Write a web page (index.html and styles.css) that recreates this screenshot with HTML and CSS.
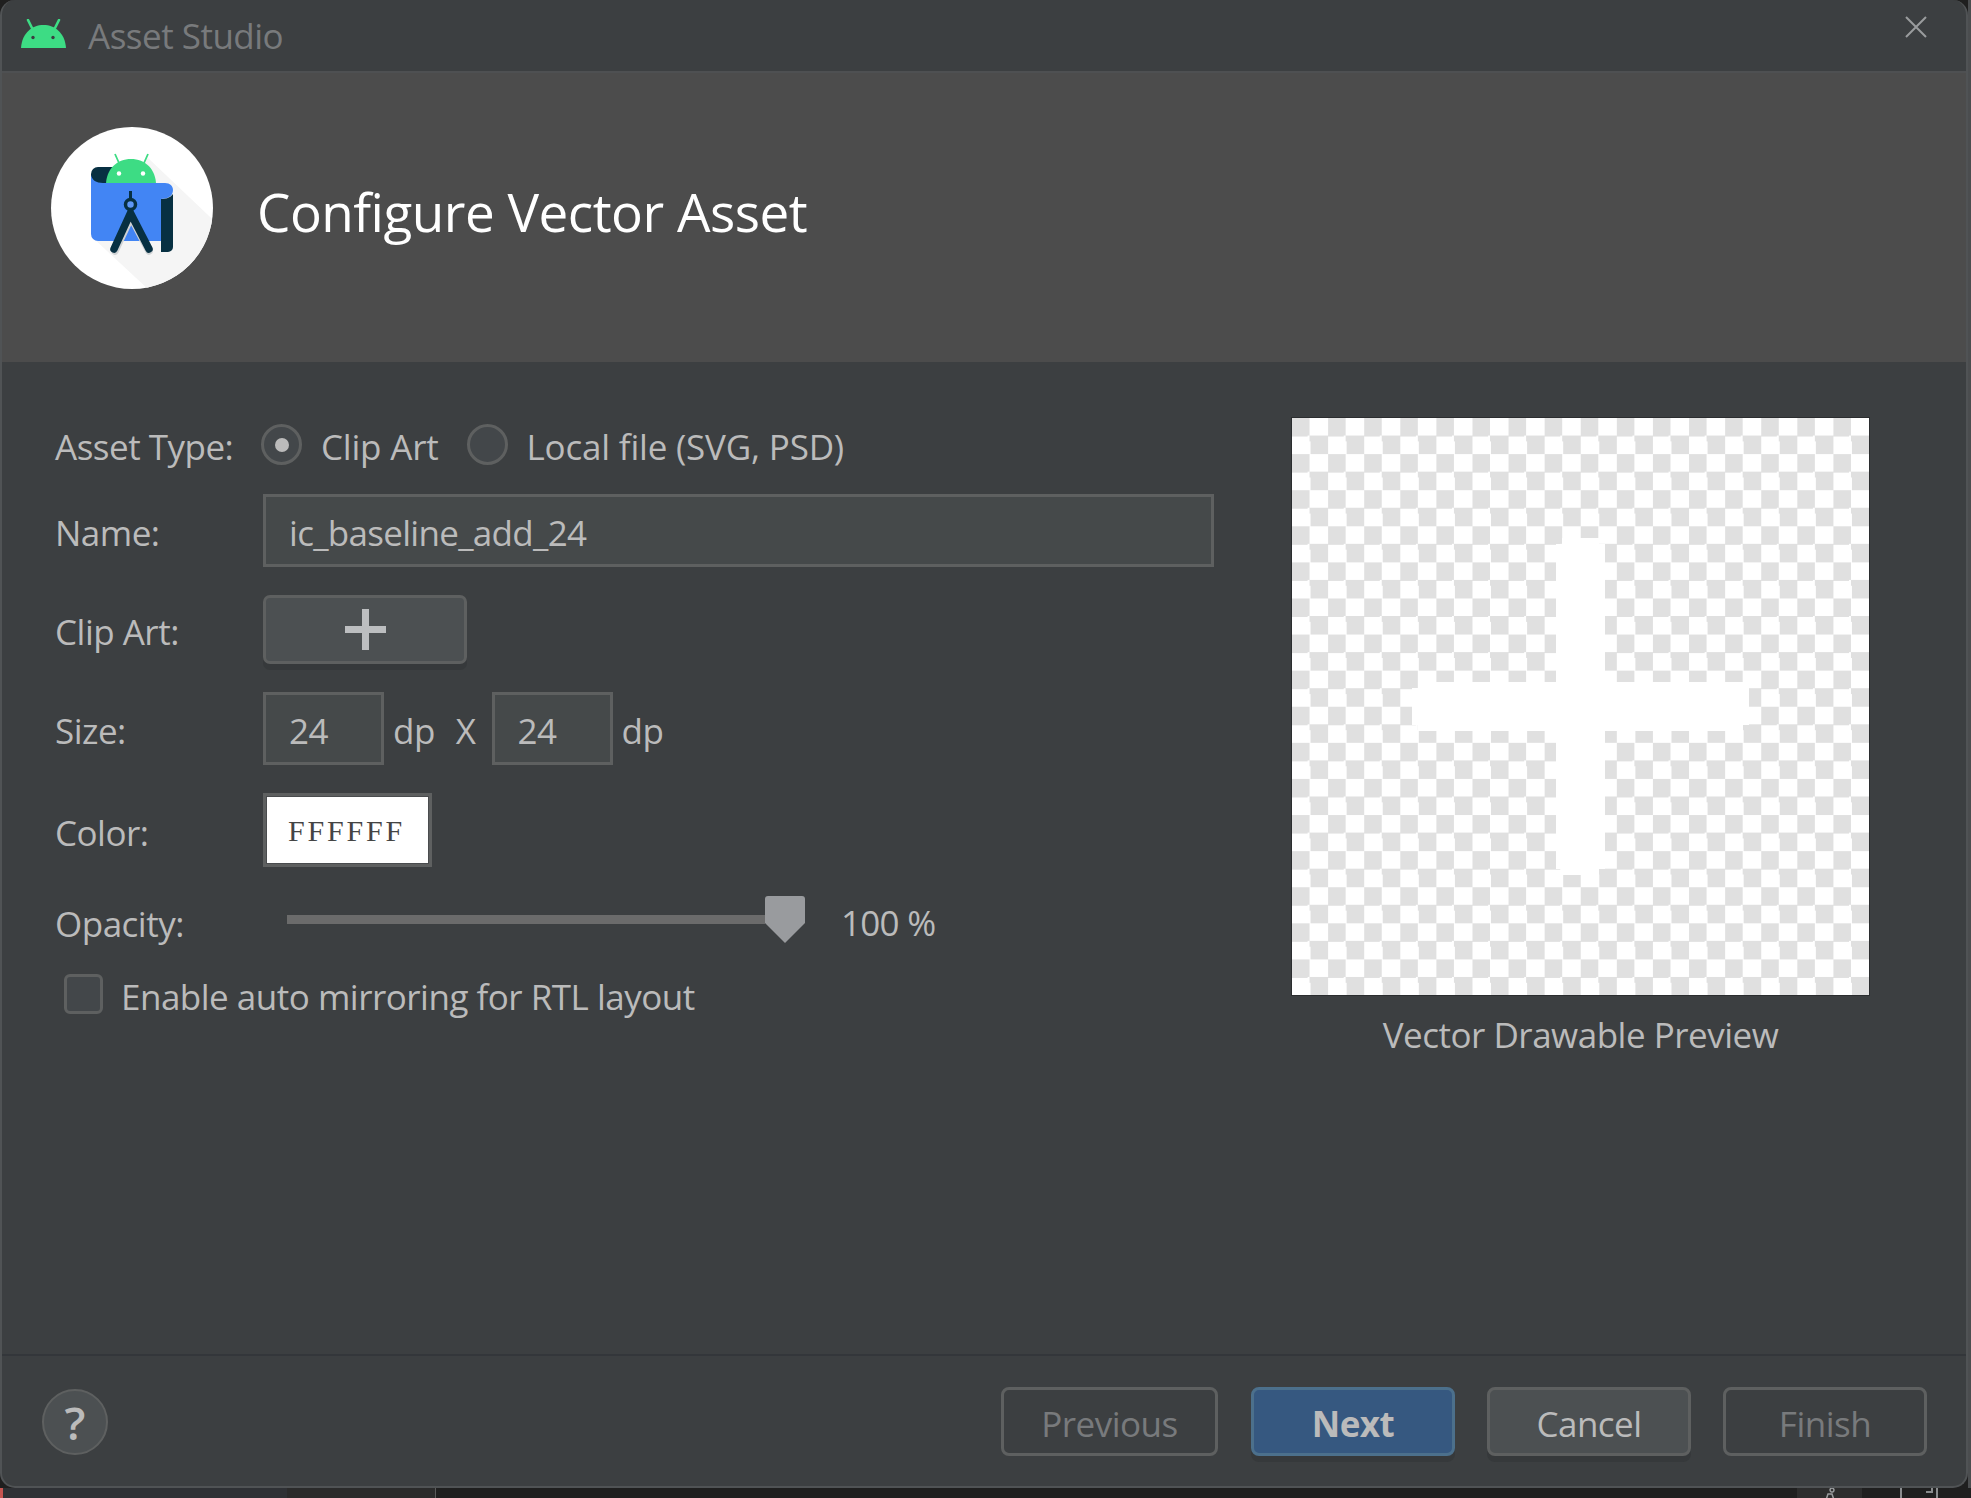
FILE: index.html
```html
<!DOCTYPE html>
<html>
<head>
    <title>Asset Studio</title>
    <link rel="stylesheet" href="styles.css">
</head>
<body>
    <div class="screen">
        <div class="dialog">
            <div class="titlebar">
                <svg class="app-icon" viewBox="0 0 45 29">
                    <path d="M7 1l4 8M38 1l-4 8" stroke="#3ddc84" stroke-width="2.6" stroke-linecap="round"/>
                    <path d="M0 29C1 14 11 6 22.5 6S44 14 45 29Z" fill="#3ddc84"/>
                    <circle cx="12" cy="18.500" r="1.700" fill="#3c3f41"/>
                    <circle cx="32" cy="18.500" r="1.700" fill="#3c3f41"/>
                </svg>
                <span class="window-title">Asset Studio</span>
                <svg class="close-icon" viewBox="0 0 22 22">
                    <path d="M1 1l20 20M21 1L1 21" stroke="#9a9c9e" stroke-width="2"/>
                </svg>
            </div>

            <div class="banner">
                <svg class="logo" viewBox="0 0 162 162">
                    <defs>
                        <clipPath id="logoClip"><circle cx="81" cy="81" r="81"/></clipPath>
                    </defs>
                    <circle cx="81" cy="81" r="81" fill="#fff"/>
                    <path d="M96 30L176 106L112 176L41 110Z" fill="#f5f5f5" clip-path="url(#logoClip)"/>
                    <path d="M64 27l4 9M97 27l-4 9" stroke="#3ddc84" stroke-width="1.800"/>
                    <path d="M40 52V47a7 7 0 0 1 7-7H74V60H40Z" fill="#073042"/>
                    <path d="M55 58C55 42 66 32 80 32S105 42 105 58Z" fill="#3ddc84"/>
                    <circle cx="68" cy="46.500" r="2.200" fill="#fff"/>
                    <circle cx="92" cy="46.500" r="2.200" fill="#fff"/>
                    <path d="M40 48C41 53 45 56 52 56H114C119 56 122 59 122 63C122 69 117 72 110 72V114H47A7 7 0 0 1 40 107Z" fill="#4285f4"/>
                    <path d="M110 72C115 72 119 71 122 67V120A5 5 0 0 1 117 125H110Z" fill="#073042"/>
                    <path d="M64 124L80 90L98 124" fill="none" stroke="#cfd2d4" stroke-width="7.500" stroke-linecap="round"/>
                    <path d="M63 122L79.500 86L98 122" fill="none" stroke="#073042" stroke-width="7.500" stroke-linecap="round"/>
                    <path d="M79.500 64V72" stroke="#073042" stroke-width="3"/>
                    <circle cx="79.500" cy="77.500" r="5" fill="#5e97f6" stroke="#073042" stroke-width="3.500"/>
                </svg>
                <h1 class="banner-title">Configure Vector Asset</h1>
            </div>

            <div class="content">
                <div class="form">
                    <div class="row row-type">
                        <span class="label">Asset Type:</span>
                        <span class="radio radio-on"></span>
                        <span class="choice">Clip Art</span>
                        <span class="radio"></span>
                        <span class="choice">Local file (SVG, PSD)</span>
                    </div>
                    <div class="row row-name">
                        <span class="label">Name:</span>
                        <div class="field field-name">ic_baseline_add_24</div>
                    </div>
                    <div class="row row-clip">
                        <span class="label">Clip Art:</span>
                        <div class="clip-button">
                            <svg class="clip-plus" viewBox="0 0 41 41">
                                <path d="M20.500 0V41M0 20.500H41" stroke="#bcbec0" stroke-width="7"/>
                            </svg>
                        </div>
                    </div>
                    <div class="row row-size">
                        <span class="label">Size:</span>
                        <div class="field field-size">24</div>
                        <span class="unit">dp</span>
                        <span class="unit unit-x">X</span>
                        <div class="field field-size">24</div>
                        <span class="unit">dp</span>
                    </div>
                    <div class="row row-color">
                        <span class="label">Color:</span>
                        <div class="swatch">FFFFFF</div>
                    </div>
                    <div class="row row-opacity">
                        <span class="label">Opacity:</span>
                        <div class="slider-track"></div>
                        <svg class="slider-thumb" viewBox="0 0 40 47">
                            <path d="M0 3a3 3 0 0 1 3-3H37a3 3 0 0 1 3 3V27L20 47L0 27Z" fill="#999b9e"/>
                        </svg>
                        <span class="percent">100 %</span>
                    </div>
                    <div class="row row-check">
                        <span class="checkbox"></span>
                        <span class="choice">Enable auto mirroring for RTL layout</span>
                    </div>
                </div>
                <div class="preview">
                    <div class="preview-box">
                        <svg class="preview-plus" viewBox="0 0 96 96">
                            <path d="M45 20H51V21H52V44H75V45H76V51H75V52H52V75H51V76H45V75H44V52H21V51H20V45H21V44H44V21H45Z" fill="#fff"/>
                        </svg>
                    </div>
                    <div class="preview-caption">Vector Drawable Preview</div>
                </div>
            </div>

            <div class="footer">
                <div class="help">?</div>
                <div class="buttons">
                    <div class="btn btn-disabled btn-previous">Previous</div>
                    <div class="btn btn-primary">Next</div>
                    <div class="btn btn-cancel">Cancel</div>
                    <div class="btn btn-disabled btn-finish">Finish</div>
                </div>
            </div>
        </div>
        <div class="edge"></div>
    </div>
    <div class="behind">
        <span class="behind-red"></span>
        <span class="behind-left"></span>
        <span class="behind-mid"></span>
        <span class="behind-tab">
            <svg class="behind-icon" viewBox="0 0 24 12">
                <path d="M12 2a2 2 0 1 1 0 .1M8 12l2-6h4l2 6" fill="none" stroke="#9a9c9e" stroke-width="1.500"/>
            </svg>
        </span>
        <svg class="behind-icon behind-square" viewBox="0 0 38 12">
            <path d="M1 0V12M37 0V12M26 4h6V0" fill="none" stroke="#8a8c8e" stroke-width="2"/>
        </svg>
    </div>
</body>
</html>
```

FILE: styles.css
```css
* {
    box-sizing: border-box;
}
html, body {
    margin: 0;
    padding: 0;
}
body {
    width: 1971px;
    height: 1498px;
    overflow: hidden;
    background-color: #1f1f1f;
    font-family: "Open Sans", "Noto Sans", sans-serif;
    font-size: 35px;
    letter-spacing: -0.5px;
    color: #bbbbbb;
}
.screen {
    display: flex;
    height: 1488px;
}
.dialog {
    width: 1968px;
    display: flex;
    flex-direction: column;
    background-color: #3c3f41;
    border: 2px solid #505355;
    border-top: 0;
    border-radius: 15px;
    overflow: hidden;
}
.edge {
    flex: 1;
    background-color: #4b4d4f;
}

/* title bar */
.titlebar {
    height: 73px;
    flex: none;
    display: flex;
    align-items: center;
    padding: 0 39px 0 19px;
    border-bottom: 2px solid #4e5052;
}
.app-icon {
    width: 45px;
    height: 29px;
    margin-top: -5px;
}
.window-title {
    margin-left: 22px;
    color: #787a7c;
}
.close-icon {
    width: 22px;
    height: 22px;
    margin-left: auto;
    margin-bottom: 17px;
}

/* banner */
.banner {
    height: 289px;
    flex: none;
    display: flex;
    align-items: flex-start;
    padding: 54px 0 0 49px;
    background-color: #4c4c4c;
}
.logo {
    width: 162px;
    height: 162px;
}
.banner-title {
    margin: 4px 0 0 44px;
    line-height: 162px;
    font-size: 53px;
    font-weight: 400;
    letter-spacing: -0.5px;
    color: #ffffff;
}

/* form */
.content {
    flex: 1;
    display: flex;
    padding: 55px 0 0 53px;
}
.form {
    width: 1159px;
    margin-top: 6px;
    display: flex;
    flex-direction: column;
    gap: 28px;
}
.row {
    display: flex;
    align-items: center;
}
.label {
    width: 208px;
    flex: none;
    padding-top: 4px;
}
.row-type { height: 43px; }
.row-name { height: 73px; }
.row-clip { height: 69px; }
.row-size { height: 73px; }
.row-color { height: 74px; }
.row-opacity { height: 47px; margin-top: 1px; align-items: flex-start; }
.row-check { height: 40px; margin-top: 3px; padding-left: 9px; }

.radio {
    width: 41px;
    height: 41px;
    margin-left: -2px;
    flex: none;
    display: flex;
    align-items: center;
    justify-content: center;
    border: 3px solid #5e6060;
    border-radius: 50%;
    background-color: #43474a;
}
.radio-on::after {
    content: "";
    width: 14px;
    height: 14px;
    border-radius: 50%;
    background-color: #bbbbbb;
}
.choice {
    margin-left: 19px;
    margin-right: 30px;
    padding-top: 4px;
}
.row-type .choice {
    letter-spacing: -0.2px;
}
.field {
    height: 100%;
    display: flex;
    align-items: center;
    padding: 4px 0 0 23px;
    border: 3px solid #5e6060;
    background-color: #45494a;
}
.field-name {
    width: 951px;
    letter-spacing: -0.7px;
}
.field-size {
    width: 121px;
}
.unit {
    margin-left: 9px;
    padding-top: 4px;
}
.unit-x {
    margin: 0 16px 0 21px;
}
.clip-button {
    width: 204px;
    height: 69px;
    display: flex;
    align-items: center;
    justify-content: center;
    border: 3px solid #5e6060;
    border-radius: 7px;
    background-color: #4c5052;
    box-shadow: 0 6px 0 #36393b;
}
.clip-plus {
    width: 41px;
    height: 41px;
}
.swatch {
    width: 169px;
    height: 74px;
    display: flex;
    align-items: center;
    padding: 2px 0 0 22px;
    border: 3px solid #5e6060;
    outline: 1px solid #4a4c4e;
    outline-offset: -4px;
    background-color: #ffffff;
    font-family: "Liberation Serif", serif;
    font-size: 30px;
    letter-spacing: 2.8px;
    color: #444444;
}
.slider-track {
    width: 478px;
    height: 9px;
    margin: 19px 0 0 24px;
    background-color: #6b6b6b;
}
.slider-thumb {
    width: 40px;
    height: 47px;
}
.percent {
    margin: 3px 0 0 36px;
    letter-spacing: -0.7px;
}
.checkbox {
    width: 39px;
    height: 40px;
    flex: none;
    border: 3px solid #5e6060;
    border-radius: 6px;
    background-color: #43474a;
}
.row-check .choice {
    margin-left: 18px;
}

/* preview */
.preview {
    width: 579px;
    margin-left: 77px;
}
.preview-box {
    width: 579px;
    height: 579px;
    border: 1px solid #2b2d2f;
    background-color: #ffffff;
    background-image: conic-gradient(#ffffff 25%, #e0e0e0 0 50%, #ffffff 0 75%, #e0e0e0 0);
    background-size: 36.1px 36.1px;
}
.preview-plus {
    display: block;
    width: 100%;
    height: 100%;
    shape-rendering: crispEdges;
}
.preview-caption {
    margin-top: 15px;
    text-align: center;
}

/* footer */
.footer {
    height: 132px;
    flex: none;
    display: flex;
    align-items: flex-start;
    justify-content: space-between;
    padding: 31px 39px 0 40px;
    border-top: 2px solid #33363a;
}
.help {
    width: 66px;
    height: 66px;
    margin-top: 2px;
    display: flex;
    align-items: center;
    justify-content: center;
    border: 2px solid #5e6060;
    border-radius: 50%;
    background-color: #4c5052;
    font-size: 46px;
    font-weight: 600;
    letter-spacing: 0;
}
.buttons {
    display: flex;
    gap: 32px;
}
.btn {
    width: 204px;
    height: 69px;
    display: flex;
    align-items: center;
    justify-content: center;
    padding-top: 4px;
    border: 3px solid #5e6060;
    border-radius: 8px;
}
.btn-previous {
    width: 217px;
    margin-right: 1px;
}
.btn-disabled {
    color: #787a7c;
}
.btn-primary {
    border-color: #4c708c;
    background-color: #365880;
    box-shadow: 0 6px 0 #36393b;
    font-weight: 700;
}
.btn-cancel {
    background-color: #4c5052;
    box-shadow: 0 6px 0 #36393b;
}

/* what shows under the dialog */
.behind {
    height: 10px;
    display: flex;
    overflow: hidden;
}
.behind-red {
    width: 3px;
    background-color: #c75450;
}
.behind-left {
    width: 284px;
    background-color: #2f3135;
}
.behind-mid {
    width: 149px;
    background-color: #2b2b2b;
    border-right: 1px solid #5a5a5a;
}
.behind-tab {
    width: 65px;
    margin-left: 1361px;
    display: flex;
    justify-content: center;
    background-color: #2d2d2d;
}
.behind-icon {
    width: 24px;
    height: 12px;
}
.behind-square {
    width: 38px;
    margin-left: 38px;
}
```
